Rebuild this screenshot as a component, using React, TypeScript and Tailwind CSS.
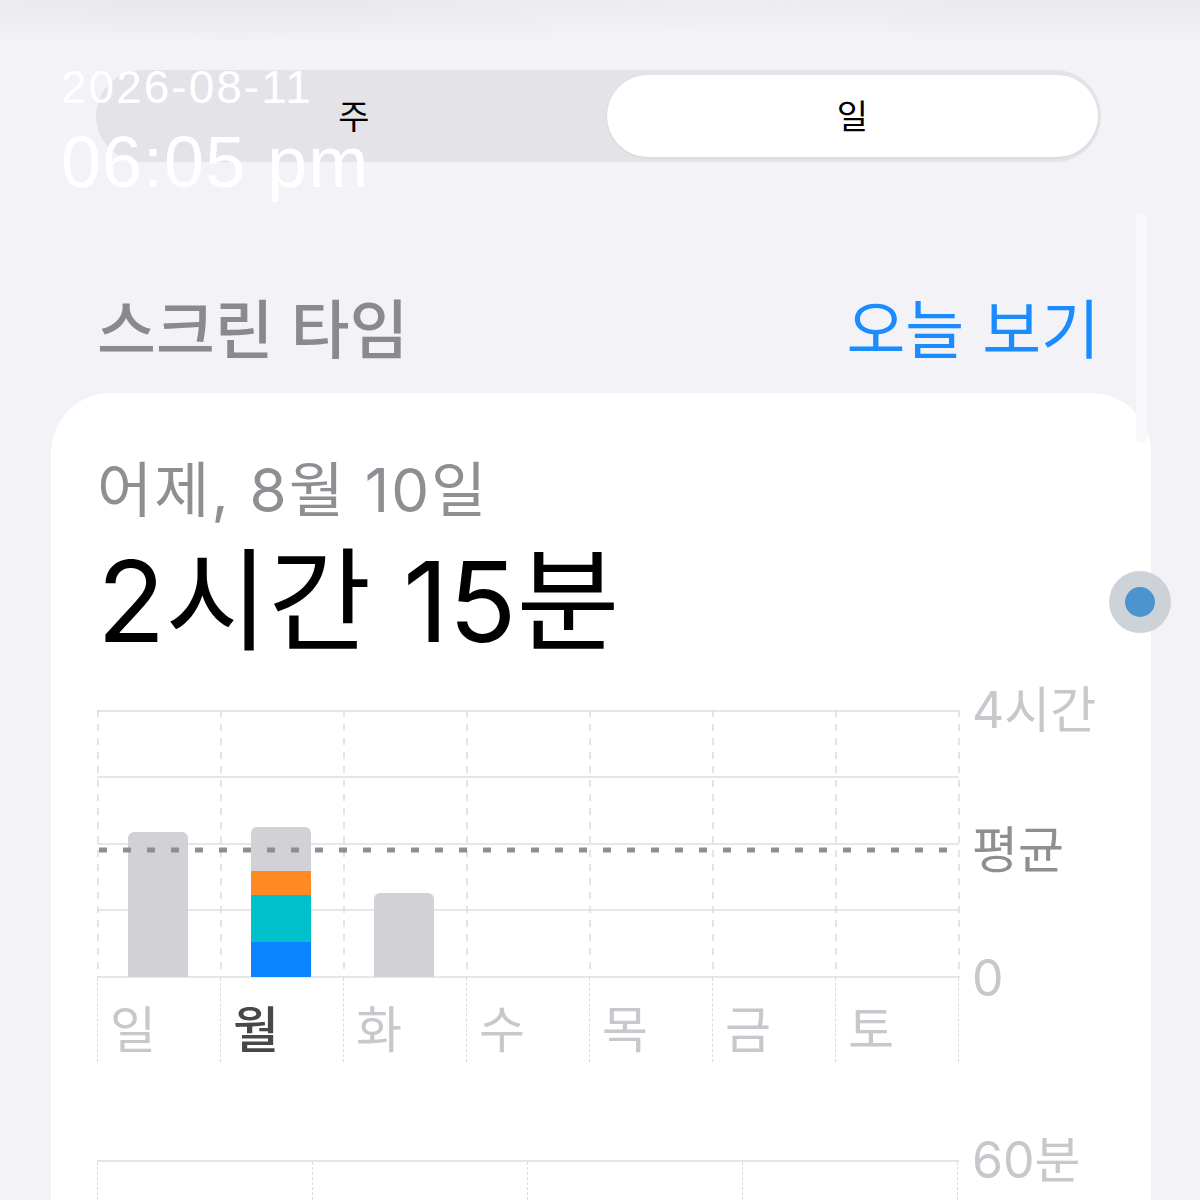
import React from 'react'

const days = ['일', '월', '화', '수', '목', '금', '토']

// bar data, px from the plot top (plot height 267)
const bars = [
  { x: 31, segments: [{ top: 122, bottom: 267, color: '#d1d1d6' }] },
  {
    x: 154,
    segments: [
      { top: 117, bottom: 161, color: '#d1d1d6' },
      { top: 161, bottom: 185, color: '#ff8a24' },
      { top: 185, bottom: 232, color: '#00c0cc' },
      { top: 232, bottom: 267, color: '#0a84ff' },
    ],
  },
  { x: 277, segments: [{ top: 183, bottom: 267, color: '#d1d1d6' }] },
]

function WeekChart() {
  const cols = [0, 123, 246, 369, 492, 615, 738, 861]
  const rows = [1, 67, 134, 200, 267]
  return (
    <svg width="864" height="268" viewBox="0 0 864 268" className="block">
      {rows.map((y) => (
        <line key={y} x1="0" x2="862" y1={y} y2={y} stroke="#e5e5ea" strokeWidth="2" />
      ))}
      {cols.map((x) => (
        <line
          key={x}
          x1={x + 1}
          x2={x + 1}
          y1="0"
          y2="268"
          stroke="#dcdce0"
          strokeWidth="1.5"
          strokeDasharray="7 7"
        />
      ))}
      {bars.map((b, i) => (
        <g key={i}>
          <clipPath id={`bar-${i}`}>
            <rect x={b.x} y={b.segments[0].top} width="60" height={268 - b.segments[0].top} rx="6" />
            <rect x={b.x} y={b.segments[0].top + 10} width="60" height={258 - b.segments[0].top} />
          </clipPath>
          <g clipPath={`url(#bar-${i})`}>
            {b.segments.map((s, j) => (
              <rect key={j} x={b.x} y={s.top} width="60" height={s.bottom - s.top} fill={s.color} />
            ))}
          </g>
        </g>
      ))}
      <line
        x1="0"
        x2="862"
        y1="140"
        y2="140"
        stroke="#8e8e93"
        strokeWidth="5"
        strokeDasharray="8 16"
        strokeDashoffset="-2"
      />
    </svg>
  )
}

export default function App() {
  return (
    <div
      className="relative w-[1200px] h-[1200px] overflow-hidden bg-[#f2f2f7]"
      style={{ fontFamily: 'Inter, "Noto Sans CJK KR", sans-serif' }}
    >
      {/* soft blur at the top */}
      <div className="absolute inset-x-0 top-0 h-[70px] bg-[radial-gradient(ellipse_at_20%_0%,#e6e6eb,transparent_45%),radial-gradient(ellipse_at_90%_0%,#e8e8ed,transparent_40%)]" />

      {/* segmented control */}
      <div className="relative mt-[70px] ml-[96px] w-[1005px] h-[92px] rounded-full bg-[#e3e3e8] p-[5px] pr-[3px] flex">
        <div className="flex-1 flex items-center justify-center text-[34px] text-black">주</div>
        <div className="w-[491px] rounded-full bg-white flex items-center justify-center text-[34px] text-black shadow-[0_1px_3px_rgba(0,0,0,0.06)]">
          일
        </div>
      </div>

      {/* header */}
      <div className="flex items-center justify-between ml-[97px] mr-[100px] mt-[132px] h-[72px]">
        <h1 className="text-[64px] leading-none font-medium text-[#8a8a8e]">스크린 타임</h1>
        <span className="text-[64px] leading-none text-[#1a8cff]">오늘 보기</span>
      </div>

      {/* card */}
      <div className="mt-[27px] ml-[51px] w-[1100px] h-[900px] bg-white rounded-t-[60px] pl-[46px] pt-[65px]">
        <div className="h-[64px] flex items-center text-[60px] text-[#8e8e93] tracking-[2px]">
          어제, 8월 10일
        </div>
        <div className="mt-[24px] h-[110px] flex items-center text-[112px] text-black">
          2시간 15분
        </div>

        <div className="mt-[54px] flex items-start">
          <div className="w-[862px]">
            <WeekChart />
            <div className="flex">
              {days.map((d, i) => (
                <div
                  key={d}
                  className="w-[123px] h-[84px] border-l-[1.5px] border-dashed border-[#dcdce0] pl-[12px] pt-[27px]"
                >
                  <span
                    className={
                      i === 1
                        ? 'text-[50px] leading-none font-medium text-[#48484a]'
                        : 'text-[50px] leading-none text-[#c7c7cc]'
                    }
                  >
                    {d}
                  </span>
                </div>
              ))}
              <div className="h-[84px] border-l-[1.5px] border-dashed border-[#dcdce0]" />
            </div>
          </div>
          <div className="ml-[13px] -mt-[22px] flex flex-col">
            <div className="h-[44px] flex items-center text-[50px] text-[#c7c7cc]">4시간</div>
            <div className="mt-[96px] h-[44px] flex items-center text-[50px] text-[#8e8e93]">평균</div>
            <div className="mt-[84px] h-[44px] flex items-center text-[50px] text-[#c7c7cc]">0</div>
          </div>
        </div>

        {/* hourly chart (cut off) */}
        <div className="mt-[76px] flex items-start">
          <div className="w-[862px] mt-[22px] border-t-2 border-[#e5e5ea] flex h-[60px]">
            {[0, 1, 2, 3].map((i) => (
              <div key={i} className="w-[215px] border-l-[1.5px] border-dashed border-[#dcdce0]" />
            ))}
            <div className="border-l-[1.5px] border-dashed border-[#dcdce0]" />
          </div>
          <div className="ml-[13px] h-[44px] flex items-center text-[50px] text-[#c7c7cc]">60분</div>
        </div>
      </div>

      {/* scroll indicator */}
      <div className="absolute left-[1136px] top-[213px] w-[11px] h-[230px] rounded-full bg-[#f8f8fb]" />

      {/* floating touch button */}
      <div className="absolute left-[1109px] top-[571px] w-[62px] h-[62px] rounded-full bg-[#c9ced5]/90 flex items-center justify-center">
        <div className="w-[30px] h-[30px] rounded-full bg-[#4b94cf]" />
      </div>

      {/* timestamp overlay */}
      <div
        className="absolute left-[61px] top-[64px] text-white leading-none"
        style={{ fontFamily: '"Liberation Sans", Arial, sans-serif' }}
      >
        <div className="text-[46px] tracking-[2px]">2026-08-11</div>
        <div className="mt-[16px] text-[72px] tracking-[1px]">06:05 pm</div>
      </div>
    </div>
  )
}
